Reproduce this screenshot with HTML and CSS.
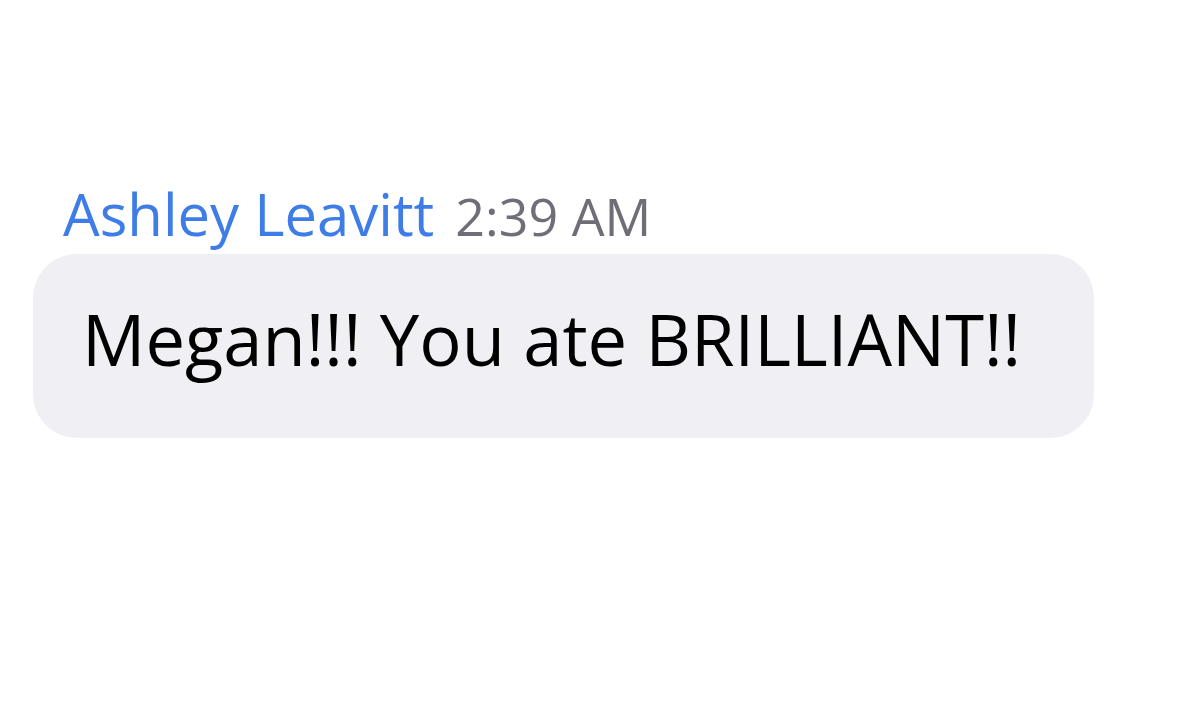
FILE: index.html
```html
<!DOCTYPE html>
<html>
<head>
<meta charset="utf-8">
<link rel="stylesheet" href="styles.css">
</head>
<body>
<div class="message">
  <div class="meta">
    <span class="name">Ashley Leavitt</span>
    <span class="time">2:39 AM</span>
  </div>
  <div class="bubble">Megan!!! You ate BRILLIANT!!</div>
</div>
</body>
</html>
```

FILE: styles.css
```css
html, body {
  margin: 0;
  padding: 0;
  background: #ffffff;
}
body {
  font-family: "Open Sans", "Noto Sans", sans-serif;
  width: 1200px;
  height: 722px;
  overflow: hidden;
}
.message {
  padding-top: 182px;
  padding-left: 33px;
  display: flex;
  flex-direction: column;
  align-items: flex-start;
}
.meta {
  display: flex;
  align-items: baseline;
  gap: 21px;
  padding-left: 30px;
  height: 72px;
  line-height: 64px;
}
.name {
  color: #3e7de8;
  font-size: 58px;
}
.time {
  color: #6f6e78;
  font-size: 52px;
}
.bubble {
  box-sizing: border-box;
  width: 1061px;
  height: 184px;
  background: #f0f0f4;
  border-radius: 44px;
  padding-left: 49px;
  padding-bottom: 14px;
  display: flex;
  align-items: center;
  font-size: 70.5px;
  color: #000000;
}
```
